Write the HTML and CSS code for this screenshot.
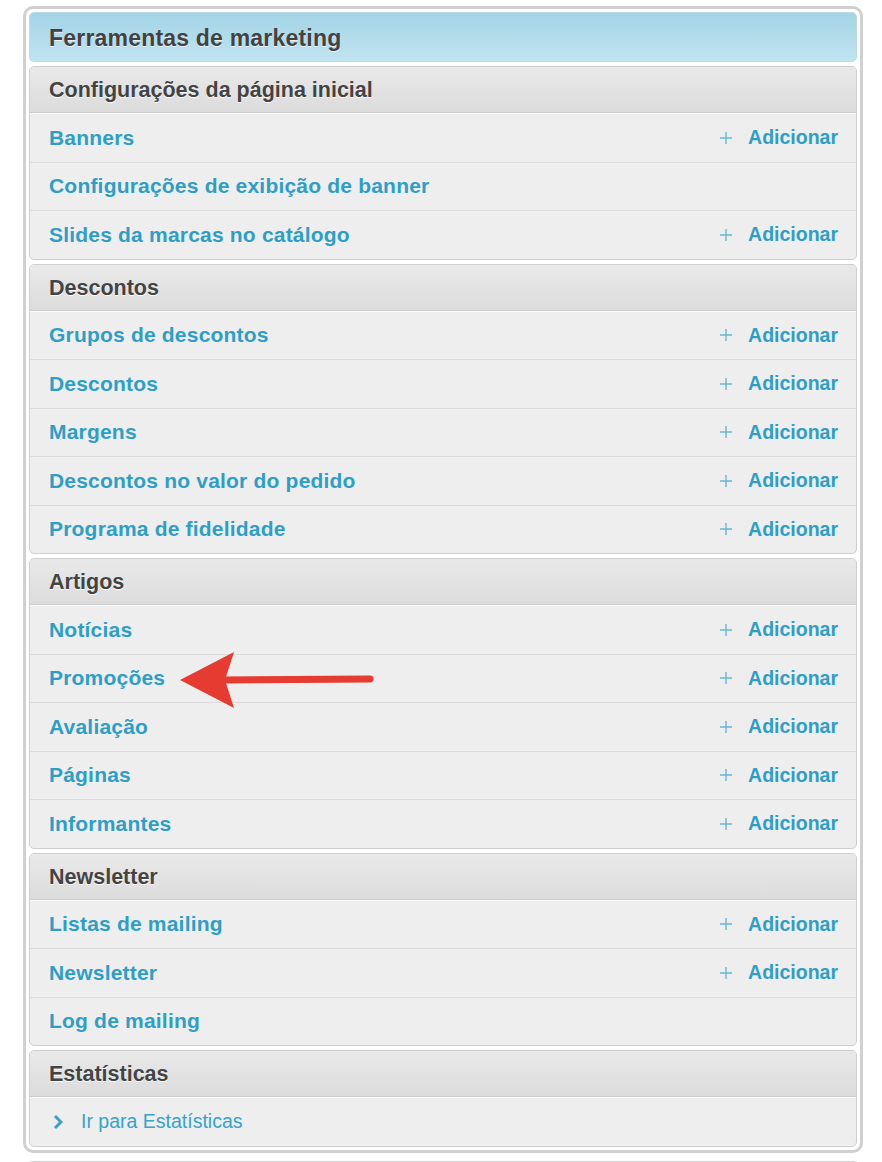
FILE: index.html
```html
<!DOCTYPE html>
<html lang="pt">
<head>
<meta charset="UTF-8">
<title>Ferramentas de marketing</title>
<link rel="stylesheet" href="styles.css">
</head>
<body>
  <div class="panel">
    <div class="panel-title">Ferramentas de marketing</div>

    <div class="section">
      <div class="section-head">Configurações da página inicial</div>
      <div class="row"><a class="link">Banners</a><a class="add"><svg class="plus" viewBox="0 0 14 14"><path d="M7 1v12M1 7h12"/></svg>Adicionar</a></div>
      <div class="row"><a class="link">Configurações de exibição de banner</a></div>
      <div class="row"><a class="link">Slides da marcas no catálogo</a><a class="add"><svg class="plus" viewBox="0 0 14 14"><path d="M7 1v12M1 7h12"/></svg>Adicionar</a></div>
    </div>

    <div class="section">
      <div class="section-head">Descontos</div>
      <div class="row"><a class="link">Grupos de descontos</a><a class="add"><svg class="plus" viewBox="0 0 14 14"><path d="M7 1v12M1 7h12"/></svg>Adicionar</a></div>
      <div class="row"><a class="link">Descontos</a><a class="add"><svg class="plus" viewBox="0 0 14 14"><path d="M7 1v12M1 7h12"/></svg>Adicionar</a></div>
      <div class="row"><a class="link">Margens</a><a class="add"><svg class="plus" viewBox="0 0 14 14"><path d="M7 1v12M1 7h12"/></svg>Adicionar</a></div>
      <div class="row"><a class="link">Descontos no valor do pedido</a><a class="add"><svg class="plus" viewBox="0 0 14 14"><path d="M7 1v12M1 7h12"/></svg>Adicionar</a></div>
      <div class="row"><a class="link">Programa de fidelidade</a><a class="add"><svg class="plus" viewBox="0 0 14 14"><path d="M7 1v12M1 7h12"/></svg>Adicionar</a></div>
    </div>

    <div class="section">
      <div class="section-head">Artigos</div>
      <div class="row"><a class="link">Notícias</a><a class="add"><svg class="plus" viewBox="0 0 14 14"><path d="M7 1v12M1 7h12"/></svg>Adicionar</a></div>
      <div class="row"><a class="link">Promoções</a><a class="add"><svg class="plus" viewBox="0 0 14 14"><path d="M7 1v12M1 7h12"/></svg>Adicionar</a></div>
      <div class="row"><a class="link">Avaliação</a><a class="add"><svg class="plus" viewBox="0 0 14 14"><path d="M7 1v12M1 7h12"/></svg>Adicionar</a></div>
      <div class="row"><a class="link">Páginas</a><a class="add"><svg class="plus" viewBox="0 0 14 14"><path d="M7 1v12M1 7h12"/></svg>Adicionar</a></div>
      <div class="row"><a class="link">Informantes</a><a class="add"><svg class="plus" viewBox="0 0 14 14"><path d="M7 1v12M1 7h12"/></svg>Adicionar</a></div>
    </div>

    <div class="section">
      <div class="section-head">Newsletter</div>
      <div class="row"><a class="link">Listas de mailing</a><a class="add"><svg class="plus" viewBox="0 0 14 14"><path d="M7 1v12M1 7h12"/></svg>Adicionar</a></div>
      <div class="row"><a class="link">Newsletter</a><a class="add"><svg class="plus" viewBox="0 0 14 14"><path d="M7 1v12M1 7h12"/></svg>Adicionar</a></div>
      <div class="row"><a class="link">Log de mailing</a></div>
    </div>

    <div class="section">
      <div class="section-head">Estatísticas</div>
      <div class="row"><a class="goto"><svg class="chevron" viewBox="0 0 10 16"><path d="M2 2l6 6-6 6"/></svg>Ir para Estatísticas</a></div>
    </div>

    <!-- pointer to Promoções -->
    <svg class="arrow" viewBox="0 0 200 60">
      <path class="arrow-head" d="M0 28 L54 0 L45 28 L54 56 Z"/>
      <path class="arrow-shaft" d="M40 28 L190 27"/>
    </svg>
  </div>

  <div class="panel panel-next"></div>
</body>
</html>
```

FILE: styles.css
```css
body {
  margin: 0;
  font-family: "Liberation Sans", Arial, sans-serif;
  background: #fff;
}
.panel {
  position: relative;
  width: 828px;
  margin: 6px 0 0 23px;
  padding: 3px;
  border: 3px solid #d0d0d0;
  border-radius: 10px;
  display: flex;
  flex-direction: column;
  gap: 4px;
}
.panel-next {
  margin-top: 8px;
  height: 40px;
}
.panel-title {
  height: 48px;
  line-height: 50px;
  padding-left: 19px;
  border: 1px solid #b9dcea;
  border-radius: 5px;
  background: linear-gradient(#a3d4e6, #c1e3f0);
  font-size: 23px;
  letter-spacing: 0.2px;
  font-weight: bold;
  color: #424242;
  text-shadow: 0 1px 0 rgba(255, 255, 255, 0.7);
}
.section {
  border: 1px solid #cfcfcf;
  border-radius: 5px;
  background: #eeeeee;
  overflow: hidden;
}
.section-head {
  height: 45px;
  line-height: 46px;
  padding-left: 19px;
  border-bottom: 1px solid #cdcdcd;
  background: linear-gradient(#e9e9e9, #dcdcdc);
  font-size: 21.5px;
  font-weight: bold;
  color: #434343;
  text-shadow: 0 1px 0 #fff;
}
.row {
  height: 47.5px;
  padding: 0 18px 0 19px;
  border-top: 1px solid #dcdcdc;
  display: flex;
  align-items: center;
  justify-content: space-between;
}
.section-head + .row {
  border-top: 1px solid #fafafa;
}
.link {
  font-size: 21px;
  letter-spacing: 0.2px;
  font-weight: bold;
  color: #2e9ec7;
}
.add {
  display: flex;
  align-items: center;
  font-size: 19.5px;
  font-weight: bold;
  color: #2e9ec7;
}
.plus {
  width: 14px;
  height: 14px;
  margin-right: 15px;
  fill: none;
  stroke: #66b8d4;
  stroke-width: 1.4;
}
.goto {
  font-size: 19.5px;
  color: #35a3cb;
  display: flex;
  align-items: center;
}
.chevron {
  width: 10px;
  height: 16px;
  margin: 0 18px 0 4px;
  fill: none;
  stroke: #3b9fc6;
  stroke-width: 3;
}
.arrow {
  position: absolute;
  left: 154px;
  top: 643px;
  width: 200px;
  height: 60px;
}
.arrow-head {
  fill: #e53b30;
}
.arrow-shaft {
  stroke: #e53b30;
  stroke-width: 7;
  stroke-linecap: round;
}
```
